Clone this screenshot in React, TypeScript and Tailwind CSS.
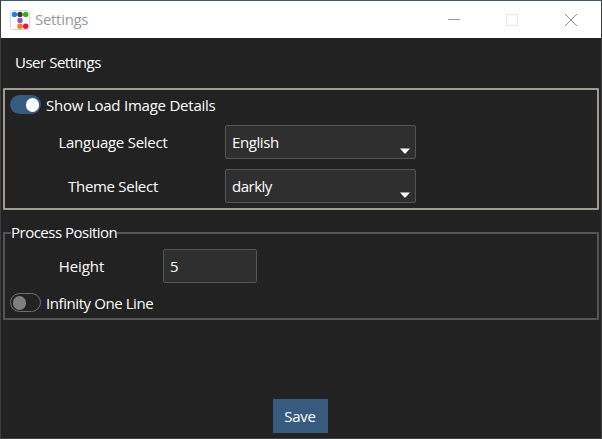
import type { ReactNode } from "react";

function Toggle({ on = false }: { on?: boolean }) {
  return (
    <span
      className={
        on
          ? "flex h-[19px] w-[31px] items-center justify-end rounded-full bg-[#375a7f] pr-[2px]"
          : "flex h-[19px] w-[31px] items-center rounded-full border border-[#6f6f6f] pl-[2px]"
      }
    >
      <span className={on ? "h-[14px] w-[13px] rounded-full bg-white" : "h-[14px] w-[13px] rounded-full bg-[#7f7f7f]"} />
    </span>
  );
}

function Select({ children }: { children: ReactNode }) {
  return (
    <div className="flex h-[34px] w-[191px] items-center justify-between rounded-[2px] border border-[#555] bg-[#2f2f2f] pr-[5px] pl-[6px]">
      <span>{children}</span>
      <svg width="10" height="6" viewBox="0 0 10 6" className="mt-[17px]">
        <path d="M0 0.5H10L5.5 5.5H4.5Z" fill="#fff" />
      </svg>
    </div>
  );
}

function AppIcon() {
  return (
    <svg width="20" height="20" viewBox="0 0 20 20">
      <rect x="0.5" y="0.5" width="19" height="19" rx="2" fill="#fff" stroke="#d5d5d5" />
      <circle cx="4.4" cy="4.4" r="2.7" fill="#2080e0" />
      <circle cx="10" cy="4.4" r="2.7" fill="#343a40" />
      <circle cx="15.7" cy="4.4" r="2.7" fill="#37b010" />
      <circle cx="10" cy="10.4" r="2.7" fill="#9b51c0" />
      <circle cx="10" cy="16.2" r="2.7" fill="#ff7a18" />
      <circle cx="15.7" cy="16.2" r="2.7" fill="#ff0840" />
    </svg>
  );
}

export default function App() {
  return (
    <div className="flex h-[439px] w-[602px] flex-col border border-t-[#46566a] border-r-[#3d3d3d] border-b-[#414141] border-l-[#3d3d3d] bg-[#222] font-['Open_Sans','Noto_Sans',sans-serif] text-[15px] leading-5 tracking-[-0.3px] whitespace-nowrap text-white">
      <header className="flex h-[37px] shrink-0 items-center bg-white pl-[9px] text-[#999]">
        <AppIcon />
        <span className="mb-[2px] ml-[5px]">Settings</span>
        <div className="ml-auto flex items-center pr-[24px]">
          <svg width="12" height="12" viewBox="0 0 12 12"><path d="M0 5.5H12" stroke="#999" /></svg>
          <svg className="ml-[46px]" width="12" height="12" viewBox="0 0 12 12"><path d="M.5.5H11.5V11.5H.5Z" fill="none" stroke="#e8e8e8" /></svg>
          <svg className="ml-[47px]" width="12" height="12" viewBox="0 0 12 12"><path d="M0 0L12 12M12 0L0 12" stroke="#8c8c8c" /></svg>
        </div>
      </header>

      <div className="mt-[14px] ml-[14px] h-5 shrink-0 tracking-[-0.48px]">User Settings</div>

      <section className="mx-[2px] mt-[16px] h-[122px] shrink-0 rounded-[1px] border-2 border-[#9f9b8d] pt-[5px] pl-[5px]">
        <div className="flex h-[19px] items-center gap-[5px]">
          <Toggle on />
          <span className="tracking-[-0.23px]">Show Load Image Details</span>
        </div>
        <div className="mt-[11px] flex items-center">
          <span className="w-[206px] text-center tracking-[-0.25px]">Language Select</span>
          <div className="ml-[9px] tracking-[-0.4px]"><Select>English</Select></div>
        </div>
        <div className="mt-[10px] flex items-center">
          <span className="w-[206px] text-center">Theme Select</span>
          <div className="ml-[9px] tracking-[-0.5px]"><Select>darkly</Select></div>
        </div>
      </section>

      <fieldset className="mx-[2px] mt-[13px] h-[97px] shrink-0 rounded-[1px] border-2 border-[#555] pl-[5px]">
        <legend className="ml-px h-5 bg-[#222] leading-[18px] tracking-[-0.5px]">Process Position</legend>
        <div className="mt-[6px] flex items-center">
          <span className="w-[143px] text-center tracking-[-0.1px]">Height</span>
          <div className="ml-[10px] flex h-[34px] w-[94px] items-center rounded-[2px] border border-[#555] bg-[#2f2f2f] pl-[6px]">5</div>
        </div>
        <div className="mt-[10px] flex h-[19px] items-center gap-[5px]">
          <Toggle />
          <span className="tracking-[-0.42px]">Infinity One Line</span>
        </div>
      </fieldset>

      <div className="mt-auto mb-[5px] flex justify-center pr-[2px]">
        <button className="h-[34px] w-[55px] bg-[#375a7f]">Save</button>
      </div>
    </div>
  );
}
